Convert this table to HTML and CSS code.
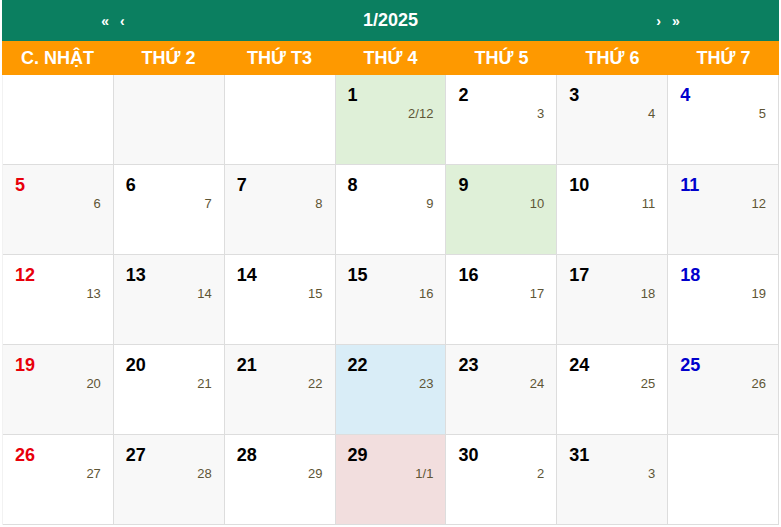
FILE: index.html
```html
<!DOCTYPE html>
<html lang="vi">
<head>
    <meta charset="UTF-8">
    <meta name="viewport" content="width=device-width, initial-scale=1.0">
    <title>Lịch tháng 1/2025</title>
    <link rel="stylesheet" href="styles.css">
</head>
<body>
    <div class="calendar">
        <div class="month-bar">
            <div class="nav">
                <a href="#">&laquo;</a>
                <a href="#">&lsaquo;</a>
            </div>
            <div class="month-title">1/2025</div>
            <div class="nav">
                <a href="#">&rsaquo;</a>
                <a href="#">&raquo;</a>
            </div>
        </div>
        <div class="weekdays">
            <div>C. NHẬT</div>
            <div>THỨ 2</div>
            <div>THỨ T3</div>
            <div>THỨ 4</div>
            <div>THỨ 5</div>
            <div>THỨ 6</div>
            <div>THỨ 7</div>
        </div>
        <div class="days" id="days"></div>
    </div>

    <script>
        const daysElem = document.getElementById('days');

        // lunar day for each solar day of January 2025
        const lunar = ['2/12', '3', '4', '5', '6', '7', '8', '9', '10', '11', '12', '13', '14', '15', '16',
            '17', '18', '19', '20', '21', '22', '23', '24', '25', '26', '27', '28', '29', '1/1', '2', '3'];
        const marked = { 1: 'good', 9: 'good', 22: 'info', 29: 'tet' };
        const firstWeekday = 3;
        const totalCells = 35;

        for (let i = 0; i < totalCells; i++) {
            const cell = document.createElement('div');
            const row = Math.floor(i / 7);
            const col = i % 7;
            const day = i - firstWeekday + 1;

            cell.className = 'day';
            if ((row + col) % 2 === 1) cell.classList.add('alt');
            if (col === 0) cell.classList.add('sunday');
            if (col === 6) cell.classList.add('saturday');

            if (day >= 1 && day <= 31) {
                if (marked[day]) cell.classList.add(marked[day]);
                cell.innerHTML = `<div class="solar">${day}</div><div class="lunar">${lunar[day - 1]}</div>`;
            }
            daysElem.appendChild(cell);
        }
    </script>
</body>
</html>
```

FILE: styles.css
```css
body {
    margin: 0;
    padding: 0;
    font-family: "Liberation Sans", Arial, sans-serif;
    background: #fff;
}

.calendar {
    width: 777px;
    margin-left: 2px;
}

.month-bar {
    display: grid;
    grid-template-columns: 2fr 3fr 2fr;
    align-items: center;
    height: 41px;
    background: #0b7f60;
    color: #fff;
}

.month-bar .nav {
    display: flex;
    justify-content: center;
    gap: 11px;
}

.month-bar .nav a {
    color: #fff;
    font-size: 14px;
    font-weight: bold;
    text-decoration: none;
}

.month-title {
    text-align: center;
    font-size: 18px;
    font-weight: bold;
}

.weekdays {
    display: grid;
    grid-template-columns: repeat(7, 1fr);
    height: 34px;
    background: #fe9900;
    color: #fff;
    font-size: 18px;
    font-weight: bold;
}

.weekdays div {
    display: flex;
    align-items: center;
    justify-content: center;
}

.days {
    display: grid;
    grid-template-columns: repeat(7, 1fr);
    grid-auto-rows: 90px;
    border-left: 1px solid #f2f2f2;
}

.day {
    box-sizing: border-box;
    padding: 10px 12px 0 12px;
    border-right: 1px solid #ddd;
    border-bottom: 1px solid #ddd;
    background: #fff;
}

.day.alt {
    background: #f8f8f8;
}

.day.good {
    background: #dff0d8;
}

.day.info {
    background: #d9edf7;
}

.day.tet {
    background: #f2dede;
}

.day .solar {
    font-size: 18px;
    line-height: 21px;
    font-weight: bold;
    color: #000;
}

.day.sunday .solar {
    color: #e8000b;
}

.day.saturday .solar {
    color: #0000cc;
}

.day .lunar {
    font-size: 13px;
    line-height: 15px;
    text-align: right;
    color: #5e5535;
}
```
